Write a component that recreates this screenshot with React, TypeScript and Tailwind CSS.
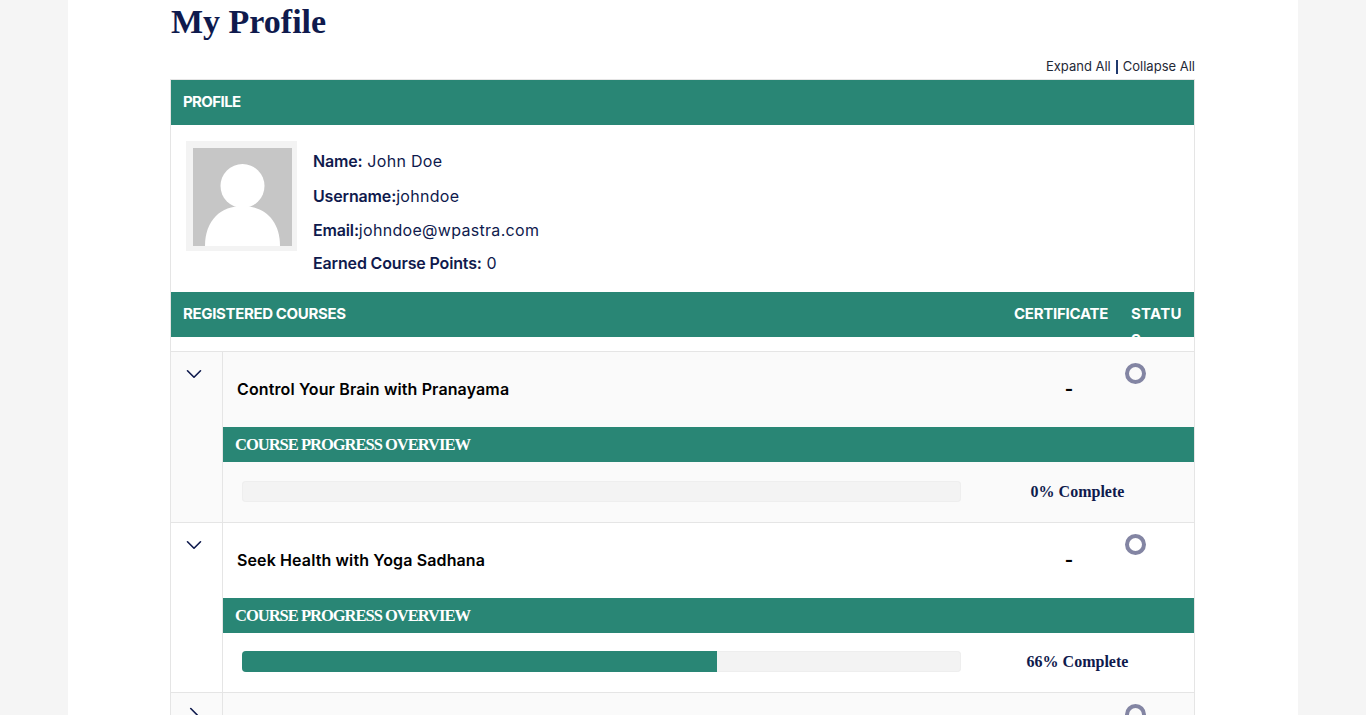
import React from "react";
import { ChevronDown, ChevronRight } from "lucide-react";

const courses = [
  { id: 1, title: "Control Your Brain with Pranayama", progress: 0, open: true },
  { id: 2, title: "Seek Health with Yoga Sadhana", progress: 66, open: true },
  { id: 3, title: "", progress: 0, open: false },
];

const sans = "font-['Inter','Noto_Sans',sans-serif]";
const serif = "font-['Liberation_Serif',serif]";

const Avatar = () => (
  <div className="w-[111px] h-[110px] shrink-0 bg-[#f3f3f3] p-[7px]">
    <svg viewBox="0 0 99 98" className="w-[99px] h-[98px] block">
      <rect width="99" height="98" fill="#c6c6c6" />
      <circle cx="49.500" cy="38" r="22" fill="#fff" />
      <path d="M12 98 C12 72 28 58 49.500 58 C71 58 87 72 87 98 Z" fill="#fff" />
    </svg>
  </div>
);

const CourseRow = ({ course, striped }: { course: (typeof courses)[number]; striped: boolean }) => (
  <div className={`flex border-b border-[#e5e5e5] ${striped ? "bg-[#fafafa]" : "bg-white"}`}>
    <div className="w-[52px] shrink-0 border-r border-[#e5e5e5] flex justify-center pt-[9px] pr-[5px]">
      {course.open ? (
        <ChevronDown size={26} strokeWidth={1.5} className="text-[#0f1a4d] h-[26px]" />
      ) : (
        <ChevronRight size={26} strokeWidth={1.5} className="text-[#0f1a4d] h-[26px]" />
      )}
    </div>
    <div className="flex-1 min-w-0">
      <div className="h-[75px] flex">
        <div className={`flex-1 pl-[14px] pt-[25px] text-[16px] leading-[24px] font-semibold text-black tracking-[0.12px] ${sans}`}>
          {course.title}
        </div>
        <div className={`w-[26px] text-center pt-[23px] text-[18px] leading-[28px] font-bold text-black ${sans}`}>-</div>
        <div className="w-[112px] pl-[43px] pt-[11px]">
          <div className="w-[21px] h-[21px] rounded-full border-[4px] border-[#8385a3]" />
        </div>
      </div>
      <div className={`h-[35px] bg-[#298675] text-white pl-[12px] text-[16.500px] leading-[35px] font-bold tracking-[-1px] ${serif}`}>
        COURSE PROGRESS OVERVIEW
      </div>
      <div className="h-[59.600px] flex items-center pl-[19px]">
        <div className="w-[719px] h-[21px] rounded-[4px] bg-[#f3f3f3] shadow-[inset_0_0_0_1px_#eeeeee] overflow-hidden -mt-[1px]">
          {course.progress > 0 && (
            <div className="h-full bg-[#298675]" style={{ width: `${course.progress}%` }} />
          )}
        </div>
        <div className={`flex-1 text-center text-[16px] font-bold text-[#0f1a4d] ${serif}`}>
          {course.progress}% Complete
        </div>
      </div>
    </div>
  </div>
);

const App = () => {
  return (
    <div className={`h-[715px] overflow-hidden bg-[#f5f5f5] ${sans}`}>
      <div className="mx-[68px] w-[1230px] h-full bg-white pl-[102px] pr-[103px]">
        <h1 className={`pl-[1px] text-[34px] leading-[44px] font-bold text-[#0f1a4d] ${serif}`}>My Profile</h1>
        <div className="mt-[13px] h-[22px] flex justify-end items-center text-[13px] text-[#1f2937] pb-[3px]">
          <span>Expand All</span>
          <span className="mx-[5px] w-[2px] h-[14px] bg-[#1f3a6e]" />
          <span>Collapse All</span>
        </div>
        <div className="border-x border-t border-[#e5e5e5]">
          <div className="h-[45px] bg-[#298675] flex items-center pl-[12px] text-[15px] font-bold text-white tracking-[-0.6px]">
            PROFILE
          </div>
          <div className="h-[167px] flex gap-[16px] pl-[15px] pt-[16px]">
            <Avatar />
            <div className="text-[16px] text-[#0f1a4d] tracking-[0.3px] leading-[24px] pt-[8px]">
              <p className="mb-[10.500px]"><b className="font-semibold tracking-[-0.15px]">Name:</b> John Doe</p>
              <p className="mb-[10px]"><b className="font-semibold tracking-[-0.15px]">Username:</b>johndoe</p>
              <p className="mb-[9.500px]"><b className="font-semibold tracking-[-0.15px]">Email:</b>johndoe@wpastra.com</p>
              <p><b className="font-semibold tracking-[-0.15px]">Earned Course Points:</b> 0</p>
            </div>
          </div>
          <div className="h-[45px] bg-[#298675] flex overflow-hidden text-[15px] leading-[26px] font-bold text-white">
            <div className="flex-1 pl-[12px] pt-[9px] tracking-[-0.35px]">REGISTERED COURSES</div>
            <div className="w-[94px] pt-[9px] tracking-[-0.25px] whitespace-nowrap">CERTIFICATE</div>
            <div className="w-[86px] pl-[23px] pr-[10px] pt-[9px] break-all tracking-[0.3px]">STATUS</div>
          </div>
          <div className="h-[15px] border-b border-[#e5e5e5]" />
          {courses.map((course, i) => (
            <CourseRow key={course.id} course={course} striped={i % 2 === 0} />
          ))}
        </div>
      </div>
    </div>
  );
};

export default App;
